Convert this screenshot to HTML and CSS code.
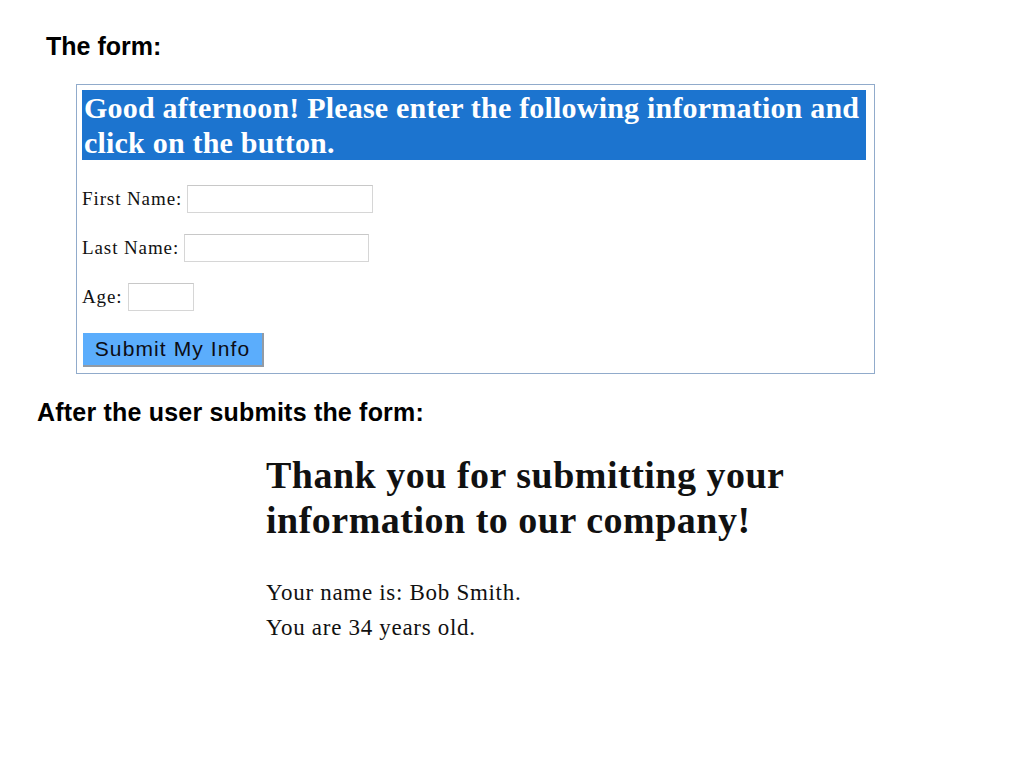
FILE: index.html
```html
<!DOCTYPE html>
<html lang="en">
<head>
  <meta charset="UTF-8">
  <title>The form</title>
  <link rel="stylesheet" href="styles.css">
</head>
<body>
  <h3 class="caption caption-form">The form:</h3>
  <div class="form-box">
    <h2 class="greeting">Good afternoon! Please enter the following information and click on the button.</h2>
    <p class="field field-first">
      <label for="firstName">First Name:</label>
      <input type="text" id="firstName" class="text-input">
    </p>
    <p class="field">
      <label for="lastName">Last Name:</label>
      <input type="text" id="lastName" class="text-input last-input">
    </p>
    <p class="field">
      <label for="age">Age:</label>
      <input type="text" id="age" class="text-input age-input">
    </p>
    <button class="submit-btn" type="button">Submit My Info</button>
  </div>
  <h3 class="caption caption-after">After the user submits the form:</h3>
  <div class="result">
    <h1 class="thanks">Thank you for submitting your information to our company!</h1>
    <p class="result-line result-first">Your name is: Bob Smith.</p>
    <p class="result-line">You are 34 years old.</p>
  </div>
</body>
</html>
```
FILE: styles.css
```css
body {
  margin: 0;
  background-color: #ffffff;
  font-family: "Liberation Serif", "Times New Roman", serif;
  color: #111111;
}
.caption {
  font-family: "Liberation Sans", Arial, sans-serif;
  font-weight: bold;
  font-size: 25px;
  line-height: 29px;
  color: #000000;
  margin: 0;
}
.caption-form {
  padding: 32px 0 0 46px;
}
.form-box {
  margin: 23px 0 0 76px;
  width: 784px;
  border: 1px solid #91abcb;
  padding: 5px 8px 6px 5px;
}
.greeting {
  background-color: #1c74cf;
  color: #ffffff;
  font-size: 30px;
  line-height: 35px;
  letter-spacing: 0.2px;
  margin: 0;
  padding: 0 2px;
}
.field {
  margin: 21px 0 0 0;
  font-size: 19px;
  line-height: 28px;
  letter-spacing: 0.9px;
  display: flex;
  align-items: center;
}
.field-first {
  margin-top: 25px;
}
.text-input {
  box-sizing: border-box;
  margin-left: 5px;
  width: 186px;
  height: 28px;
  padding: 1px 2px;
  border: 1px solid #d6d6d6;
  border-top-color: #c8c8c8;
  background: #ffffff;
}
.last-input {
  width: 185px;
}
.age-input {
  width: 66px;
}
.submit-btn {
  display: block;
  box-sizing: border-box;
  margin-top: 22px;
  margin-left: 1px;
  width: 181px;
  height: 34px;
  font-family: "Liberation Sans", Arial, sans-serif;
  font-size: 21px;
  letter-spacing: 1.1px;
  color: #0c0c14;
  background-color: #5badfc;
  border: none;
  border-right: 2px solid #939ba4;
  border-bottom: 2px solid #939ba4;
  padding: 0;
}
.caption-after {
  padding: 24px 0 0 37px;
  letter-spacing: 0.2px;
}
.result {
  padding: 26px 0 0 266px;
}
.thanks {
  font-size: 38px;
  line-height: 45px;
  letter-spacing: 0.5px;
  margin: 0;
  width: 560px;
}
.result-line {
  font-size: 23px;
  line-height: 35px;
  letter-spacing: 0.7px;
  margin: 0;
}
.result-first {
  margin-top: 32px;
}
```
